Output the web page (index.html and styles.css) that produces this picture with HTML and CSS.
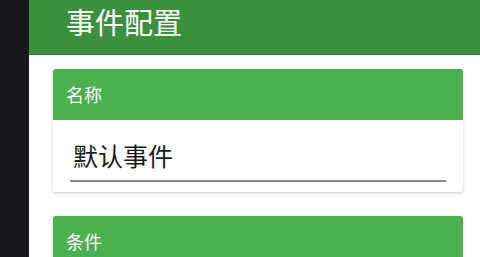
FILE: index.html
```html
<!DOCTYPE html>
<html lang="zh-CN">
<head>
<meta charset="utf-8">
<link rel="stylesheet" href="styles.css">
</head>
<body>
<div class="app">
  <aside class="side"></aside>
  <main class="main">
    <header class="topbar"><h1 class="title">事件配置</h1></header>
    <section class="content">
      <div class="card">
        <div class="card-head">名称</div>
        <div class="card-body">
          <div class="field">默认事件</div>
        </div>
      </div>
      <div class="card">
        <div class="card-head">条件</div>
        <div class="card-body"></div>
      </div>
    </section>
  </main>
</div>
</body>
</html>
```

FILE: styles.css
```css
html, body {
  margin: 0;
  padding: 0;
  height: 100%;
  overflow: hidden;
  font-family: "Noto Sans CJK SC", "Noto Sans", sans-serif;
}
.app {
  display: flex;
  height: 257px;
  width: 480px;
  overflow: hidden;
}
.side {
  width: 29px;
  flex: none;
  background: #17181d;
}
.main {
  flex: 1;
  background: #ffffff;
  display: flex;
  flex-direction: column;
}
.topbar {
  height: 55px;
  flex: none;
  background: #3b8f3f;
  border-bottom: 1px solid #347f38;
  display: flex;
  align-items: center;
  padding-left: 37px;
  box-sizing: border-box;
}
.title {
  margin: 0;
  color: #ffffff;
  font-size: 29px;
  font-weight: 400;
  line-height: 1;
  position: relative;
  top: -6px;
}
.content {
  padding: 14px 17px 0 24px;
  display: flex;
  flex-direction: column;
  gap: 24px;
}
.card {
  border-radius: 3px;
  background: #ffffff;
  box-shadow: 0 1px 3px rgba(0,0,0,0.22);
  overflow: hidden;
}
.card-head {
  height: 51px;
  background: #4caf50;
  color: #ffffff;
  font-size: 18px;
  line-height: 51px;
  padding-left: 13px;
}
.card-body {
  height: 72px;
  padding: 0 17px;
  box-sizing: border-box;
}
.field {
  height: 62px;
  border-bottom: 2px solid #8a8a8a;
  font-size: 25px;
  color: #1a1a1a;
  line-height: 1;
  padding-left: 3px;
  padding-top: 23px;
  box-sizing: border-box;
}
```
